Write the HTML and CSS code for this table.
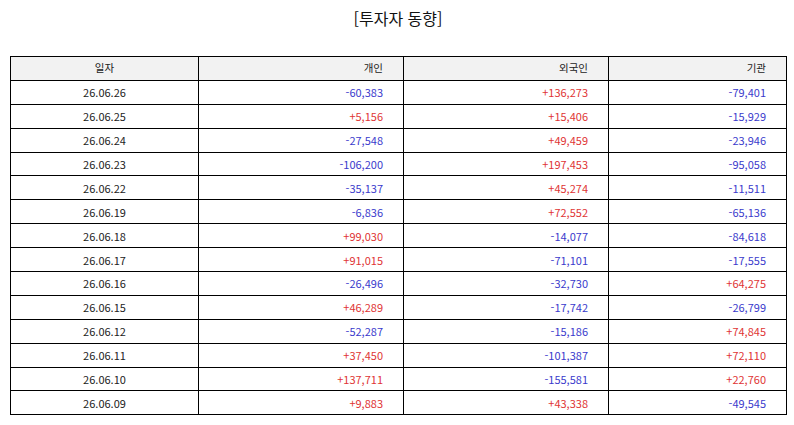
FILE: index.html
```html
<!DOCTYPE html>
<html lang="ko">
<head>
<meta charset="utf-8">
<link rel="stylesheet" href="styles.css">
</head>
<body>
<div class="page">
  <h1 class="title">[투자자 동향]</h1>
  <table class="grid">
    <colgroup>
      <col class="c-date"><col class="c-num"><col class="c-num"><col class="c-last">
    </colgroup>
    <thead>
      <tr><th class="date">일자</th><th>개인</th><th>외국인</th><th>기관</th></tr>
    </thead>
    <tbody>
      <tr><td class="date">26.06.26</td><td class="dn">-60,383</td><td class="up">+136,273</td><td class="dn">-79,401</td></tr>
      <tr><td class="date">26.06.25</td><td class="up">+5,156</td><td class="up">+15,406</td><td class="dn">-15,929</td></tr>
      <tr><td class="date">26.06.24</td><td class="dn">-27,548</td><td class="up">+49,459</td><td class="dn">-23,946</td></tr>
      <tr><td class="date">26.06.23</td><td class="dn">-106,200</td><td class="up">+197,453</td><td class="dn">-95,058</td></tr>
      <tr><td class="date">26.06.22</td><td class="dn">-35,137</td><td class="up">+45,274</td><td class="dn">-11,511</td></tr>
      <tr><td class="date">26.06.19</td><td class="dn">-6,836</td><td class="up">+72,552</td><td class="dn">-65,136</td></tr>
      <tr><td class="date">26.06.18</td><td class="up">+99,030</td><td class="dn">-14,077</td><td class="dn">-84,618</td></tr>
      <tr><td class="date">26.06.17</td><td class="up">+91,015</td><td class="dn">-71,101</td><td class="dn">-17,555</td></tr>
      <tr><td class="date">26.06.16</td><td class="dn">-26,496</td><td class="dn">-32,730</td><td class="up">+64,275</td></tr>
      <tr><td class="date">26.06.15</td><td class="up">+46,289</td><td class="dn">-17,742</td><td class="dn">-26,799</td></tr>
      <tr><td class="date">26.06.12</td><td class="dn">-52,287</td><td class="dn">-15,186</td><td class="up">+74,845</td></tr>
      <tr><td class="date">26.06.11</td><td class="up">+37,450</td><td class="dn">-101,387</td><td class="up">+72,110</td></tr>
      <tr><td class="date">26.06.10</td><td class="up">+137,711</td><td class="dn">-155,581</td><td class="up">+22,760</td></tr>
      <tr><td class="date">26.06.09</td><td class="up">+9,883</td><td class="up">+43,338</td><td class="dn">-49,545</td></tr>
    </tbody>
  </table>
</div>
</body>
</html>
```
FILE: styles.css
```css
html, body {
  margin: 0;
  padding: 0;
  background: #ffffff;
}
.page {
  padding: 6px 8px 0 10px;
  font-family: "Noto Sans CJK KR", "Noto Sans", sans-serif;
  color: #222222;
}
.title {
  margin: 0 0 26px 0;
  text-align: center;
  font-size: 16px;
  font-weight: normal;
  line-height: 24px;
  color: #111111;
}
.grid {
  width: 776px;
  border-collapse: collapse;
  table-layout: fixed;
  font-size: 11px;
}
.c-date { width: 188px; }
.c-num { width: 205px; }
.c-last { width: 178px; }
.grid th, .grid td {
  border: 1px solid #000000;
  height: 22.9px;
  padding: 0 20px 0 4px;
  text-align: right;
  font-weight: normal;
  line-height: 14px;
}
.grid th {
  background: #f2f2f2;
  color: #222222;
  font-size: 10.5px;
}
.grid .date {
  text-align: center;
  padding: 0;
}
.up { color: #e03434; }
.dn { color: #3a3acc; }
```
